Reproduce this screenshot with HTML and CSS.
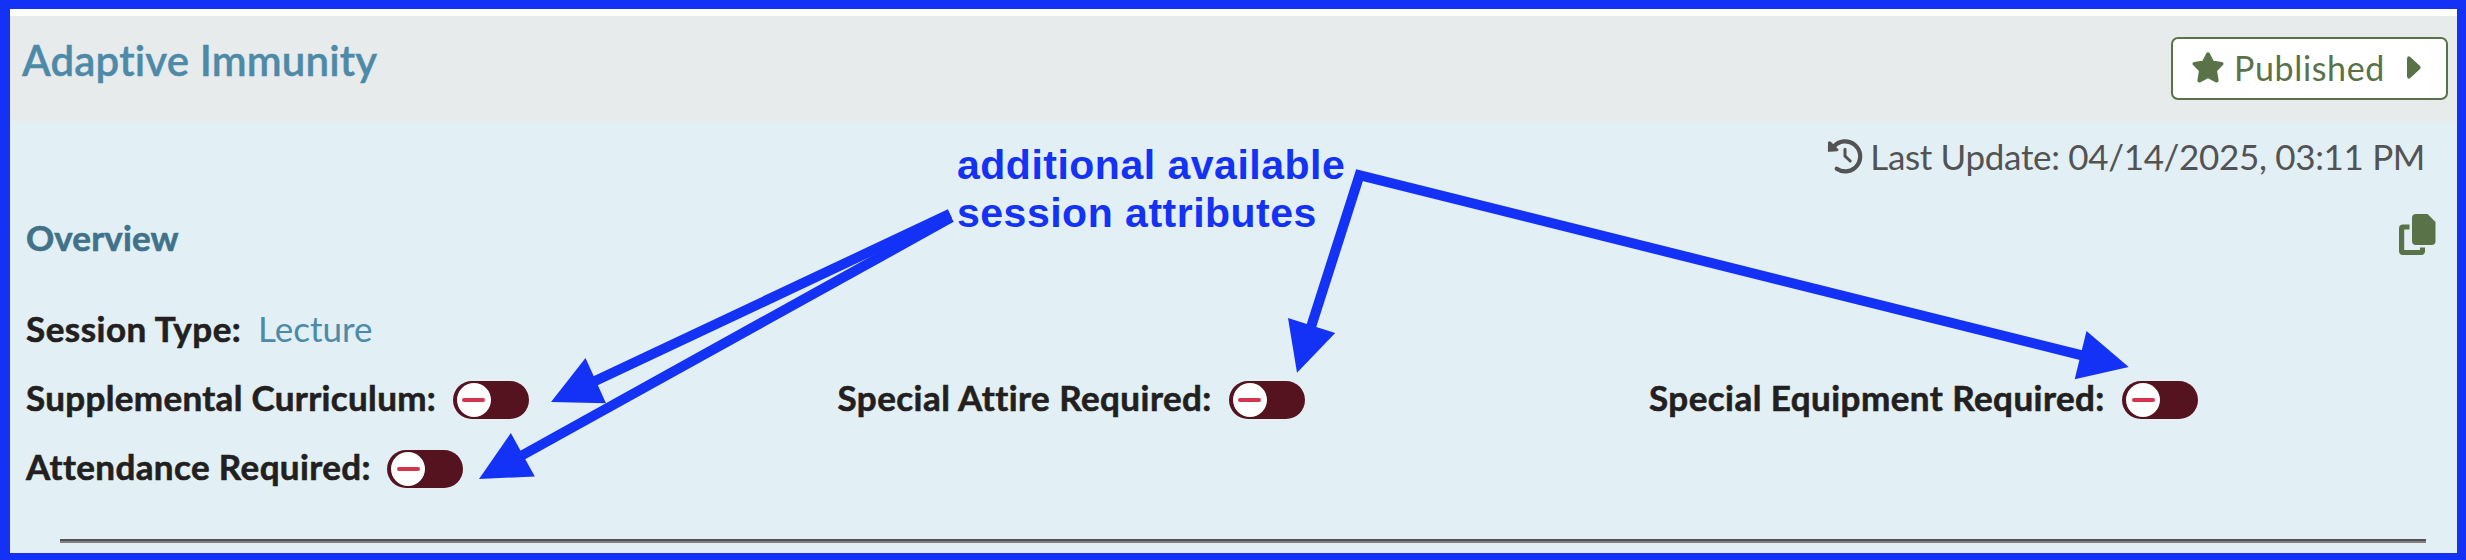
FILE: index.html
```
<!DOCTYPE html>
<html lang="en">
<head>
<meta charset="utf-8">
<title>Adaptive Immunity</title>
<link rel="stylesheet" href="styles.css">
</head>
<body>
<main class="session">
  <header class="session-header">
    <h1 class="title">Adaptive Immunity</h1>
    <button class="status" type="button">
      <svg class="star" viewBox="0 0 32 31"><path d="M14.3 1.2Q16-.9 17.7 1.2L21.5 8.8 30 10.1Q32.4 10.9 31.2 12.8L25.1 18.9 26.6 28.2Q26.6 30.9 24 30.4L16 26.2 8 30.4Q5.400 30.900 5.400 28.200L6.900 18.900.8 12.800Q-.4 10.900 2 10.100L10.500 8.800Z"/></svg>
      <span class="status-text">Published</span>
      <svg class="caret" viewBox="0 0 14 23"><path d="M0 2.500Q.6-.8 3.300 1L13 10Q14.200 11.500 13 13L3.300 22Q.6 23.800 0 20.500Z"/></svg>
    </button>
  </header>
  <div class="updated">
    <svg class="history" viewBox="0 0 34 34" fill="none" stroke="currentColor" stroke-linecap="round"><path d="M8.700 29.700A15 15 0 1 0 5.700 7.700" stroke-width="4.200"/><path d="M0 3.500Q.8 1.200 2.800 2.800L10.600 10.600Q11.800 13-.1 12.800Z" fill="currentColor" stroke="none"/><path d="M17 10.200V17L22.200 22" stroke-width="3"/></svg>
    <span class="updated-text">Last Update: 04/14/2025, 03:11 PM</span>
  </div>
  <div class="overview">
    <h2 class="overview-title">Overview</h2>
    <svg class="copy" viewBox="0 0 37 41"><path d="M17 0H28.500L36.500 8V27Q36.500 31 32.500 31H17Q13 31 13 27V4Q13 0 17 0Z"/><path d="M4 10.500H10.500V15.500H5.200V36H21V33.500H26V37Q26 41 22 41H4Q0 41 0 37V14.500Q0 10.500 4 10.500Z"/></svg>
  </div>
  <div class="fields">
    <div class="field field-wide"><span class="label label-type">Session Type:</span><a class="link">Lecture</a></div>
    <div class="field"><span class="label label-supplemental">Supplemental Curriculum:</span><span class="toggle"><span class="knob"></span></span></div>
    <div class="field"><span class="label label-attire">Special Attire Required:</span><span class="toggle"><span class="knob"></span></span></div>
    <div class="field"><span class="label label-equipment">Special Equipment Required:</span><span class="toggle"><span class="knob"></span></span></div>
    <div class="field"><span class="label label-attendance">Attendance Required:</span><span class="toggle"><span class="knob"></span></span></div>
  </div>
  <div class="rule"></div>
</main>
<svg class="annotation" viewBox="0 0 2466 560">
  <g fill="none" stroke="#1432f5" stroke-width="10">
    <path d="M950 213.800L594 381.500"/>
    <path d="M951.300 217.500L520 456.500"/>
    <path d="M1311 327L1359.500 175.200L2083 355.600" stroke-miterlimit="10"/>
  </g>
  <g fill="#1432f5">
    <path d="M585.500 358L551 402L606 403.200Z"/>
    <path d="M510.800 433L479 479L534.800 476.500Z"/>
    <path d="M1288 318L1335.200 333L1297 372.700Z"/>
    <path d="M2086.500 331L2128.700 367L2074.700 379.300Z"/>
  </g>
  <text class="note" x="957" y="178.600">additional available</text>
  <text class="note" x="957" y="227.300">session attributes</text>
</svg>
</body>
</html>
```

FILE: styles.css
```
* { box-sizing: border-box; }
body {
  margin: 0;
  font-family: Lato, sans-serif;
  font-variant-ligatures: none;
}
.session {
  width: 2466px;
  height: 560px;
  overflow: hidden;
  border: solid #1432f5;
  border-width: 9px 9px 7px 10px;
  background: #e2eff5;
  color: #231f20;
  font-size: 35px;
}
.session-header {
  display: flex;
  justify-content: space-between;
  height: 112px;
  padding: 21px 9px 0 12px;
  border-top: 7px solid #fff;
  background: #e7ebec;
}
.title {
  margin: 1px 0 0;
  font-size: 42px;
  font-weight: 600;
  line-height: 44px;
  letter-spacing: .15px;
  color: #4d8aa8;
  -webkit-text-stroke: .4px currentColor;
}
.status {
  display: flex;
  align-items: flex-start;
  width: 277px;
  height: 63px;
  padding: 13px 0 0 19px;
  border: 2px solid #5a7247;
  border-radius: 7px;
  background: #fff;
  color: #5a7247;
  fill: #5a7247;
  font: 400 34px/40px Lato, sans-serif;
}
.star { width: 32px; height: 31px; }
.status-text {
  width: 171px;
  margin: -4px 0 0 10px;
  text-align: left;
  letter-spacing: .65px;
}
.caret { width: 14px; height: 23px; margin: 4px 0 0 2px; }
.updated {
  display: flex;
  justify-content: flex-end;
  gap: 8px;
  height: 80px;
  padding: 18px 32px 0 0;
  color: #535353;
}
.history { width: 34px; height: 34px; overflow: visible; }
.updated-text {
  margin-top: -3px;
  line-height: 40px;
  letter-spacing: -.33px;
}
.overview {
  display: flex;
  justify-content: space-between;
  height: 92px;
  padding: 13px 21px 0 16px;
}
.overview-title {
  margin: 3px 0 0;
  font-size: 35px;
  line-height: 40px;
  letter-spacing: .1px;
  color: #41728a;
  -webkit-text-stroke: .6px currentColor;
}
.copy { width: 37px; height: 41px; fill: #5a7247; }
.fields {
  display: grid;
  grid-template-columns: repeat(3, 811.5px);
  grid-auto-rows: 69px;
  padding-left: 16px;
  line-height: 71px;
}
.field { display: flex; white-space: nowrap; }
.field-wide { grid-column: 1 / -1; }
.label {
  font-weight: 700;
  -webkit-text-stroke: .6px currentColor;
}
.label-type { width: 232px; letter-spacing: .5px; }
.label-supplemental { width: 426.500px; letter-spacing: .33px; }
.label-attire { width: 391px; letter-spacing: .45px; }
.label-equipment { width: 473px; letter-spacing: .45px; }
.label-attendance { width: 361px; letter-spacing: .38px; }
.link { color: #4d8aa8; }
.toggle {
  display: flex;
  width: 76px;
  height: 38px;
  margin-top: 19px;
  padding: 2px 4px;
  border-radius: 19px;
  background: #55121f;
}
.knob {
  display: flex;
  align-items: center;
  justify-content: center;
  width: 34px;
  height: 34px;
  border-radius: 50%;
  background: #fff;
}
.knob::before {
  content: "";
  width: 23px;
  height: 4px;
  margin-top: -1px;
  border-radius: 2px;
  background: #d2354c;
}
.rule {
  height: 4px;
  margin: 39px 31px 0 50px;
  border-top: 2px solid #535353;
  background: #857f7f;
}
.annotation {
  position: absolute;
  left: 0;
  top: 0;
  width: 2466px;
  height: 560px;
}
.note {
  font: 700 41px "Liberation Sans", Arial, sans-serif;
  letter-spacing: .5px;
  fill: #1432f5;
}
```
